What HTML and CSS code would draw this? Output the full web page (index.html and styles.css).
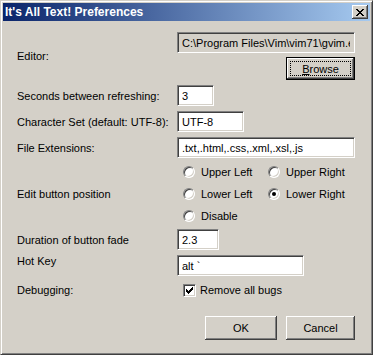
FILE: index.html
```html
<!DOCTYPE html>
<html>
<head>
  <title>It's All Text! Preferences</title>
  <link rel="stylesheet" href="styles.css">
</head>
<body>
  <div class="window">
    <div class="titlebar">
      <span class="title">It's All Text! Preferences</span>
      <button class="close-btn" type="button">
        <svg width="8" height="7" viewBox="0 0 8 7" shape-rendering="crispEdges">
          <path d="M0 0h2v1h-2z M6 0h2v1h-2z M1 1h2v1h-2z M5 1h2v1h-2z M2 2h4v1h-4z M3 3h2v1h-2z M2 4h4v1h-4z M1 5h2v1h-2z M5 5h2v1h-2z M0 6h2v1h-2z M6 6h2v1h-2z" fill="#000"/>
        </svg>
      </button>
    </div>

    <form class="prefs">
      <div class="row">
        <label class="label">Editor:</label>
        <div class="editor-control">
          <input class="field field-path" type="text" readonly value="C:\Program Files\Vim\vim71\gvim.exe">
          <button class="btn btn-default btn-browse" type="button"><span class="focus-rect"><u>B</u>rowse</span></button>
        </div>
      </div>

      <div class="row">
        <label class="label">Seconds between refreshing:</label>
        <input class="field field-seconds" type="text" value="3">
      </div>

      <div class="row">
        <label class="label">Character Set (default: UTF-8):</label>
        <input class="field field-charset" type="text" value="UTF-8">
      </div>

      <div class="row">
        <label class="label">File Extensions:</label>
        <input class="field field-ext" type="text" value=".txt,.html,.css,.xml,.xsl,.js">
      </div>

      <div class="row row-radios">
        <label class="label">Edit button position</label>
        <div class="radios">
          <div class="radio"><span class="radio-dot"></span>Upper Left</div>
          <div class="radio"><span class="radio-dot"></span>Upper Right</div>
          <div class="radio"><span class="radio-dot"></span>Lower Left</div>
          <div class="radio checked"><span class="radio-dot"></span>Lower Right</div>
          <div class="radio"><span class="radio-dot"></span>Disable</div>
        </div>
      </div>

      <div class="row row-duration">
        <label class="label">Duration of button fade</label>
        <input class="field field-duration" type="text" value="2.3">
      </div>

      <div class="row row-hotkey">
        <label class="label">Hot Key</label>
        <input class="field field-hotkey" type="text" value="alt `">
      </div>

      <div class="row row-debug">
        <label class="label">Debugging:</label>
        <div class="checkbox">
          <span class="check-box">
            <svg width="7" height="7" viewBox="0 0 7 7" shape-rendering="crispEdges">
              <path d="M0 2h1v3h-1z M1 3h1v3h-1z M2 4h1v3h-1z M3 3h1v3h-1z M4 2h1v3h-1z M5 1h1v3h-1z M6 0h1v3h-1z" fill="#000"/>
            </svg>
          </span>
          Remove all bugs
        </div>
      </div>

      <div class="actions">
        <button class="btn btn-ok" type="button">OK</button>
        <button class="btn btn-cancel" type="button">Cancel</button>
      </div>
    </form>
  </div>
</body>
</html>
```

FILE: styles.css
```css
:root {
  --face: #d4d0c8;
  --shadow: #808080;
  --dark-shadow: #404040;
  --hilight: #fff;
  --title-start: #0a246a;
  --title-end: #a6caf0;
}

body {
  margin: 0;
  padding: 0;
  background: var(--face);
  color: #000;
  font-family: "Liberation Sans", Arial, sans-serif;
  font-size: 11px;
}

.window {
  width: 373px;
  height: 355px;
  box-sizing: border-box;
  padding: 2px;
  background: var(--face);
  border: 1px solid;
  border-color: var(--face) var(--dark-shadow) var(--dark-shadow) var(--face);
  box-shadow: inset 1px 1px var(--hilight), inset -1px -1px var(--shadow);
}

.titlebar {
  height: 18px;
  display: flex;
  align-items: center;
  justify-content: space-between;
  padding: 0 2px 0 2px;
  background: linear-gradient(to right, var(--title-start), var(--title-end));
  color: #fff;
  font-size: 12px;
  font-weight: bold;
}

.close-btn {
  width: 16px;
  height: 14px;
  padding: 0;
  border: 0;
  background: var(--face);
  display: flex;
  align-items: center;
  justify-content: center;
  box-shadow: inset -1px -1px var(--dark-shadow), inset 1px 1px var(--hilight),
    inset -2px -2px var(--shadow), inset 2px 2px var(--face);
}

.prefs {
  padding: 11px 15px 0 14px;
}

.row {
  display: flex;
  align-items: center;
  margin-top: 5px;
}

.row:first-child {
  margin-top: 0;
}

.label {
  width: 160px;
  flex: none;
}

/* sunken text fields */
.field {
  box-sizing: border-box;
  height: 21px;
  margin: 0;
  padding: 0 4px;
  font: inherit;
  color: #000;
  background: #fff;
  border: 1px solid;
  border-color: var(--shadow) var(--hilight) var(--hilight) var(--shadow);
  box-shadow: inset 1px 1px var(--dark-shadow), inset -1px -1px var(--face);
  outline: none;
}

.editor-control {
  display: flex;
  flex-direction: column;
  align-items: flex-end;
  gap: 4px;
}

.field-path {
  width: 178px;
  background: var(--face);
}

.field-seconds { width: 37px; }
.field-charset { width: 67px; }
.field-ext { width: 178px; }
.field-duration { width: 42px; }
.field-hotkey { width: 127px; }

/* raised buttons */
.btn {
  box-sizing: border-box;
  height: 24px;
  padding: 0;
  border: 0;
  font: inherit;
  color: #000;
  background: var(--face);
  box-shadow: inset -1px -1px var(--dark-shadow), inset 1px 1px var(--hilight),
    inset -2px -2px var(--shadow), inset 2px 2px var(--face);
}

.btn-default {
  border: 1px solid #000;
  box-shadow: inset -1px -1px var(--dark-shadow), inset 1px 1px var(--hilight),
    inset -2px -2px var(--shadow);
}

.btn-browse {
  width: 69px;
  height: 23px;
  display: flex;
  padding: 3px;
}

.focus-rect {
  flex: 1;
  display: flex;
  align-items: center;
  justify-content: center;
  border: 1px dotted #000;
}

.btn-ok { width: 72px; }
.btn-cancel { width: 69px; }

.row-radios {
  margin-top: 3px;
}

.radios {
  display: grid;
  grid-template-columns: 85px 85px;
  grid-auto-rows: 22px;
  padding-left: 6px;
}

.radio {
  display: flex;
  align-items: center;
  gap: 6px;
}

.radio-dot {
  width: 12px;
  height: 12px;
  box-sizing: border-box;
  border-radius: 50%;
  background: #fff;
  border: 1px solid;
  border-color: var(--shadow) var(--hilight) var(--hilight) var(--shadow);
  box-shadow: inset 1px 1px var(--dark-shadow), inset -1px -1px var(--face);
  display: flex;
  align-items: center;
  justify-content: center;
}

.radio.checked .radio-dot::after {
  content: "";
  width: 4px;
  height: 4px;
  border-radius: 50%;
  background: #000;
}

.row-duration {
  margin-top: 2px;
}

.row-hotkey {
  align-items: flex-start;
}

.row-debug {
  height: 18px;
}

.checkbox {
  display: flex;
  align-items: center;
  gap: 4px;
  padding-left: 6px;
}

.check-box {
  width: 13px;
  height: 13px;
  box-sizing: border-box;
  background: #fff;
  border: 1px solid;
  border-color: var(--shadow) var(--hilight) var(--hilight) var(--shadow);
  box-shadow: inset 1px 1px var(--dark-shadow), inset -1px -1px var(--face);
  display: flex;
  align-items: center;
  justify-content: center;
}

.actions {
  display: flex;
  justify-content: flex-end;
  gap: 9px;
  margin-top: 17px;
}
```
